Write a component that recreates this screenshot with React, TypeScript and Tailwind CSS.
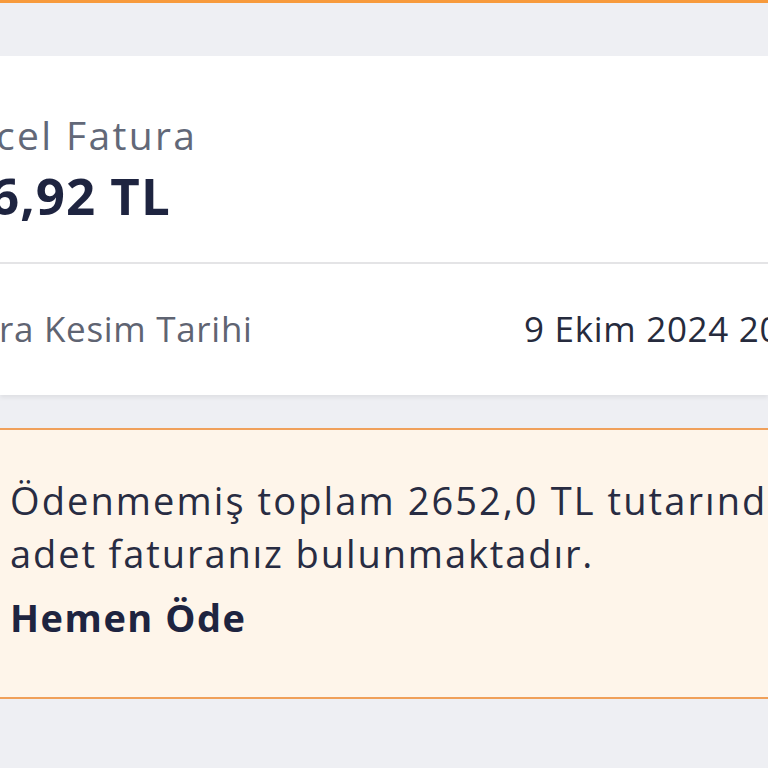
export default function App() {
  return (
    <div
      className="w-[768px] h-[768px] overflow-hidden bg-[#eeeff3] flex flex-col"
      style={{ fontFamily: "'Open Sans', 'Noto Sans', sans-serif" }}
    >
      <div className="h-[3px] bg-[#f79a3c] shrink-0" />

      <div className="mt-[53px] bg-white shadow-[0_3px_4px_rgba(0,0,0,0.06)] shrink-0">
        <div className="h-[206px] flex flex-col pt-[55px] overflow-hidden">
          <div className="-ml-[4px] text-[39px] tracking-[0.06em] leading-[48px] text-[#626878] whitespace-nowrap">
            cel Fatura
          </div>
          <div className="mt-[6px] -ml-[10px] text-[51px] tracking-[0.02em] font-bold leading-[60px] text-[#1e2440] whitespace-nowrap">
            6,92 TL
          </div>
        </div>
        <div className="h-[2px] bg-[#e4e4e6]" />
        <div className="h-[131px] flex items-center overflow-hidden">
          <div className="w-[525px] shrink-0 -ml-[1px] text-[35px] tracking-[0.02em] text-[#5f6472] whitespace-nowrap">
            ra Kesim Tarihi
          </div>
          <div className="text-[35px] tracking-[0.02em] text-[#262b3d] whitespace-nowrap">9 Ekim 2024 20:00</div>
        </div>
      </div>

      <div className="mt-[33px] border-y-2 border-[#f0a05a] bg-[#fef5ea] h-[271px] shrink-0 px-[10px] pt-[44px] overflow-hidden">
        <p className="text-[38px] tracking-[0.055em] leading-[53px] text-[#282c42] whitespace-nowrap">
          Ödenmemiş toplam 2652,0 TL tutarında 4
        </p>
        <p className="text-[38px] tracking-[0.05em] leading-[53px] text-[#282c42] whitespace-nowrap">
          adet faturanız bulunmaktadır.
        </p>
        <button className="mt-[18px] text-[38px] tracking-[0.04em] leading-none font-bold text-[#1e2440]">
          Hemen Öde
        </button>
      </div>
    </div>
  );
}
